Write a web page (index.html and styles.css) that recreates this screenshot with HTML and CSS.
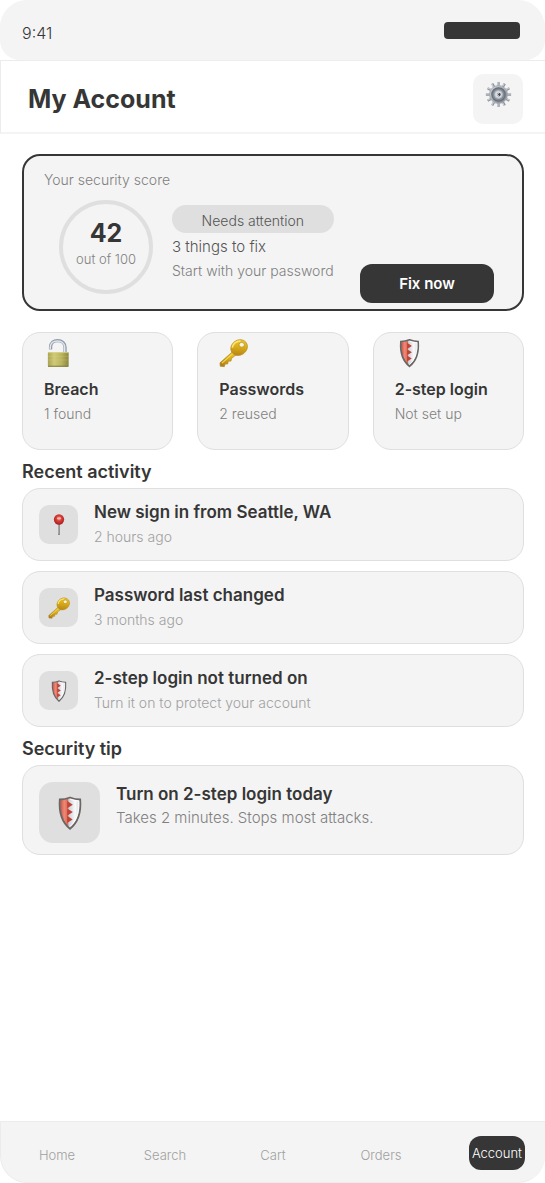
FILE: index.html
```html
<!DOCTYPE html>
<html lang="en">
<head>
  <meta charset="UTF-8">
  <meta name="viewport" content="width=device-width, initial-scale=1.0">
  <title>My Account</title>
  <link rel="stylesheet" href="styles.css">
</head>
<body>
  <!-- shared icons -->
  <svg class="icon-defs" aria-hidden="true">
    <defs>
      <linearGradient id="steel" x1="0" y1="0" x2="1" y2="1">
        <stop offset="0" stop-color="#d5d9df"/>
        <stop offset="1" stop-color="#7d828a"/>
      </linearGradient>
      <linearGradient id="brass" x1="0" y1="0" x2="1" y2="0">
        <stop offset="0" stop-color="#a9a351"/>
        <stop offset="0.3" stop-color="#d0ca78"/>
        <stop offset="0.65" stop-color="#bab45d"/>
        <stop offset="1" stop-color="#8b8640"/>
      </linearGradient>
      <linearGradient id="gold" x1="1" y1="0" x2="0" y2="1">
        <stop offset="0" stop-color="#f3d02f"/>
        <stop offset="0.45" stop-color="#dcae18"/>
        <stop offset="1" stop-color="#a87718"/>
      </linearGradient>
      <linearGradient id="red" x1="0" y1="0" x2="1" y2="0">
        <stop offset="0" stop-color="#c9523f"/>
        <stop offset="0.5" stop-color="#ee8877"/>
        <stop offset="1" stop-color="#d96552"/>
      </linearGradient>
      <linearGradient id="silver" x1="0" y1="0" x2="1" y2="0">
        <stop offset="0.3" stop-color="#b9bbc8"/>
        <stop offset="0.75" stop-color="#fafafc"/>
        <stop offset="1" stop-color="#d3d3d9"/>
      </linearGradient>
      <radialGradient id="ball" cx="0.5" cy="0.4" r="0.6">
        <stop offset="0" stop-color="#f58b82"/>
        <stop offset="0.45" stop-color="#d53c36"/>
        <stop offset="1" stop-color="#a81f20"/>
      </radialGradient>
    </defs>

    <symbol id="gear" viewBox="0 0 30 30">
      <g stroke="#8f949c" stroke-width="2.6">
        <path d="M15 1v28M1 15h28M8 2.9l14 24.200M22 2.900L8 27.100M2.900 8l24.200 14M27.100 8L2.900 22"/>
      </g>
      <g stroke="#d6dae0" stroke-width="1.1">
        <path d="M14.4 1v28M1 14.400h28M7.400 3.100l14 24.200M21.400 2.900L7.400 27.100M2.900 7.400l24.200 14M27.100 7.400L2.900 21.400"/>
      </g>
      <circle cx="15" cy="15" r="10" fill="url(#steel)" stroke="#a5aab2"/>
      <circle cx="15" cy="15" r="7.400" fill="#858b95" stroke="#696f79" stroke-width="1.400"/>
      <circle cx="15" cy="15" r="4.400" fill="#d9dde2" stroke="#aeb3ba"/>
      <circle cx="15.400" cy="15.100" r="2" fill="#454a52"/>
      <path d="M15 13.500a2 2 0 0 0 0 3.200" fill="none" stroke="#fff"/>
    </symbol>

    <symbol id="lock" viewBox="0 0 30 30">
      <path d="M6.800 11.500V9C6.800 4.300 10 2.200 14 2.200c4.600 0 7.800 2.800 7.800 7.200v6" fill="none" stroke="#929ca8" stroke-width="3.400"/>
      <path d="M6.500 11V9c0-4.300 3.200-6.400 7.500-6.400 4.400 0 7.400 2.700 7.400 6.800v6" fill="none" stroke="#e0e7ef" stroke-width="1.500"/>
      <rect x="4" y="14" width="21.500" height="15.200" rx="1" fill="url(#brass)"/>
      <path d="M4.200 14.600h21" stroke="#dfdb91" stroke-width="0.800"/>
      <path d="M4.200 18.400h21M4.200 22.200h21" stroke="#dfdb91" stroke-width="0.800" opacity="0.300"/>
      <path d="M4.200 28.700h21" stroke="#7b7637"/>
    </symbol>

    <symbol id="key" viewBox="0 0 30 30">
      <path d="M14.500 13.200L1 25.200l.3 3.500 4.200.4.800-2.600 2.700-.1.600-2.800 2.800-.2.700-2.900 5.800-4.400z" fill="url(#gold)" stroke="#a87d1b" stroke-width="0.600"/>
      <path d="M3 25.400l12.800-11" stroke="#f5db61" stroke-width="1.100"/>
      <ellipse cx="20.800" cy="9.400" rx="9" ry="7.800" transform="rotate(-35 20.800 9.400)" fill="url(#gold)" stroke="#bb901e" stroke-width="0.700"/>
      <path d="M13.800 9.600c.4-4.200 4.100-7.100 8.500-7.100" fill="none" stroke="#fae671" stroke-width="1.500"/>
      <ellipse cx="23.500" cy="6.500" rx="2.800" ry="2.500" fill="#f7f3dd" stroke="#b78e20" stroke-width="0.800"/>
    </symbol>

    <symbol id="shield" viewBox="0 0 30 30">
      <path d="M15 1.300c3 1.200 5.900 1.800 9 1.800.9 11-1.400 19.700-9 25.800C7.400 22.800 5.100 14.100 6 3.100c3.100 0 6-.6 9-1.800z" fill="url(#silver)"/>
      <path d="M13.500 2.300C11 3.200 9 3.600 6.500 3.500 5.800 14 7.600 21 13.500 26.700z" fill="url(#red)"/>
      <path d="M12.500 4.500l5 3.200-5 3.200zM12.500 11l5 3.200-5 3.200zM12.500 17.500l4.800 3.200-4.800 3.200z" fill="#c04433"/>
      <path d="M15 1.300c3 1.200 5.900 1.800 9 1.800.9 11-1.400 19.700-9 25.800C7.400 22.800 5.100 14.100 6 3.100c3.100 0 6-.6 9-1.800z" fill="none" stroke="#6a6663" stroke-width="1.600"/>
      <path d="M15 2.800c2.700 1 5 1.400 7.700 1.500.5 9.400-1.500 17-7.700 22.500" fill="none" stroke="#fff" stroke-width="0.800"/>
    </symbol>

    <symbol id="pin" viewBox="0 0 30 30">
      <path d="M15 13v15.500" stroke="#777b80" stroke-width="2.200"/>
      <path d="M14.600 14v13" stroke="#c3c6c9" stroke-width="0.800"/>
      <circle cx="15" cy="7.500" r="7" fill="url(#ball)"/>
      <ellipse cx="15" cy="6" rx="3" ry="1.500" fill="#ffc6bf" opacity="0.800"/>
    </symbol>
  </svg>

  <div class="app">
    <div class="status-bar">
      <span class="time">9:41</span>
      <span class="battery"></span>
    </div>

    <header class="header">
      <h1>My Account</h1>
      <button class="settings" type="button" aria-label="Settings">
        <svg class="icon icon-gear"><use href="#gear"/></svg>
      </button>
    </header>

    <main class="content">
      <!-- score -->
      <section class="score-card">
        <p class="score-label">Your security score</p>
        <div class="score-row">
          <div class="ring">
            <strong>42</strong>
            <span>out of 100</span>
          </div>
          <div class="score-info">
            <span class="pill">Needs attention</span>
            <p class="things">3 things to fix</p>
            <p class="start">Start with your password</p>
          </div>
          <button class="fix" type="button">Fix now</button>
        </div>
      </section>

      <section class="tiles">
        <div class="tile">
          <svg class="icon"><use href="#lock"/></svg>
          <h3>Breach</h3>
          <p>1 found</p>
        </div>
        <div class="tile">
          <svg class="icon"><use href="#key"/></svg>
          <h3>Passwords</h3>
          <p>2 reused</p>
        </div>
        <div class="tile">
          <svg class="icon"><use href="#shield"/></svg>
          <h3>2-step login</h3>
          <p>Not set up</p>
        </div>
      </section>

      <!-- activity -->
      <h2>Recent activity</h2>
      <section class="activity">
        <div class="row">
          <div class="row-icon"><svg class="icon icon-small"><use href="#pin"/></svg></div>
          <div class="row-text">
            <h3>New sign in from Seattle, WA</h3>
            <p>2 hours ago</p>
          </div>
        </div>
        <div class="row">
          <div class="row-icon"><svg class="icon icon-small"><use href="#key"/></svg></div>
          <div class="row-text">
            <h3>Password last changed</h3>
            <p>3 months ago</p>
          </div>
        </div>
        <div class="row">
          <div class="row-icon"><svg class="icon icon-small"><use href="#shield"/></svg></div>
          <div class="row-text">
            <h3>2-step login not turned on</h3>
            <p>Turn it on to protect your account</p>
          </div>
        </div>
      </section>

      <!-- tip -->
      <h2>Security tip</h2>
      <section class="row tip">
        <div class="row-icon"><svg class="icon icon-large"><use href="#shield"/></svg></div>
        <div class="row-text">
          <h3>Turn on 2-step login today</h3>
          <p>Takes 2 minutes. Stops most attacks.</p>
        </div>
      </section>
    </main>

    <nav class="bottom-nav">
      <a href="#home">Home</a>
      <a href="#search">Search</a>
      <a href="#cart">Cart</a>
      <a href="#orders">Orders</a>
      <a class="active" href="#account" aria-current="page">Account</a>
    </nav>
  </div>
</body>
</html>
```
FILE: styles.css
```css
* {
  box-sizing: border-box;
}

body {
  margin: 0;
  background: #fff;
  color: #363636;
  font-family: Inter, "Liberation Sans", sans-serif;
  font-size: 14px;
  font-weight: 300;
}

h1, h2, h3, p {
  margin: 0;
}

button {
  border: 0;
  padding: 0;
  font-family: inherit;
}

.icon-defs {
  position: absolute;
  width: 0;
  height: 0;
}

.icon {
  display: block;
  width: 29px;
  height: 30px;
}

.icon-small {
  width: 22px;
  height: 22px;
}

.icon-large {
  width: 34px;
  height: 34px;
}

.icon-gear {
  width: 27px;
  height: 27px;
}

.app {
  display: flex;
  flex-direction: column;
  min-height: 100vh;
}

/* top */
.status-bar {
  display: flex;
  justify-content: space-between;
  align-items: flex-start;
  height: 60px;
  padding: 22px 25px 0 22px;
  background: #f4f4f4;
  border-radius: 27px 27px 20px 20px;
}

.time {
  font-size: 16px;
  line-height: 22px;
}

.battery {
  width: 76px;
  height: 17px;
  background: #363636;
  border-radius: 4px;
}

.header {
  display: flex;
  justify-content: space-between;
  align-items: center;
  padding: 13px 22px 8px 27px;
  border: 1px solid #ececec;
  border-width: 1px 0 2px 1px;
  border-bottom-color: #f4f4f4;
}

h1 {
  font-size: 25px;
  line-height: 32px;
  font-weight: 700;
}

.settings {
  display: flex;
  justify-content: center;
  width: 50px;
  height: 50px;
  padding-top: 7px;
  background: #f4f4f4;
  border-radius: 10px;
}

.content {
  padding: 20px 21px 20px 22px;
}

/* security score */
.score-card {
  padding: 14px 28px 6px 20px;
  background: #f4f4f4;
  border: 2px solid #363636;
  border-radius: 18px;
}

.score-label {
  line-height: 20px;
  color: #808080;
}

.score-row {
  display: flex;
  align-items: flex-start;
  padding: 10px 0 0 15px;
}

.ring {
  display: flex;
  flex-direction: column;
  align-items: center;
  width: 94px;
  height: 94px;
  padding-top: 14px;
  border: 4px solid #dfdfdf;
  border-radius: 50%;
}

.ring strong {
  font-size: 25px;
  line-height: 30px;
  font-weight: 700;
}

.ring span {
  font-size: 13px;
  line-height: 22px;
  color: #808080;
}

.score-info {
  padding: 5px 0 0 19px;
}

.pill {
  display: block;
  padding: 4px 0 0;
  background: #dfdfdf;
  border-radius: 14px;
  line-height: 24px;
  text-align: center;
  color: #555;
}

.things {
  margin-top: 2px;
  font-size: 15px;
  line-height: 24px;
  color: #555;
}

.start {
  line-height: 24px;
  color: #808080;
}

.fix {
  width: 134px;
  height: 39px;
  margin: 64px 0 0 auto;
  background: #363636;
  border-radius: 12px;
  font-size: 15px;
  font-weight: 600;
  color: #fff;
}

/* tiles */
.tiles {
  display: grid;
  grid-template-columns: repeat(3, 1fr);
  gap: 24px;
  margin-top: 21px;
}

.tile {
  padding: 5px 10px 23px 21px;
  background: #f4f4f4;
  border: 1px solid #dfdfdf;
  border-radius: 18px;
}

.tile h3 {
  margin-top: 8px;
  font-size: 16px;
  line-height: 26px;
  font-weight: 600;
  white-space: nowrap;
}

.tile p {
  line-height: 24px;
  color: #808080;
}

h2 {
  margin: 9px 0 3px;
  font-size: 18px;
  line-height: 26px;
  font-weight: 600;
}

/* list rows */
.activity {
  display: grid;
  gap: 10px;
}

.row {
  display: flex;
  gap: 16px;
  padding: 16px;
  background: #f4f4f4;
  border: 1px solid #dfdfdf;
  border-radius: 18px;
}

.row-icon {
  display: flex;
  justify-content: center;
  align-items: center;
  width: 39px;
  height: 39px;
  background: #dfdfdf;
  border-radius: 10px;
}

.row-text {
  margin: -5px 0;
}

.row-text h3 {
  font-size: 17px;
  line-height: 25px;
  font-weight: 600;
}

.row-text p {
  line-height: 24px;
  color: #a0a0a0;
}

.tip {
  padding-bottom: 11px;
}

.tip .row-icon {
  width: 61px;
  height: 61px;
  border-radius: 14px;
}

.tip .row-text {
  margin: 0;
}

.tip .row-text p {
  font-size: 15px;
  line-height: 22px;
  color: #808080;
}

/* bottom menu */
.bottom-nav {
  display: grid;
  grid-template-columns: repeat(4, 1fr) 90px;
  align-items: center;
  justify-items: center;
  height: 62px;
  margin-top: auto;
  padding: 5px 20px 0 2px;
  background: #f4f4f4;
  border: 1px solid #ececec;
  border-width: 1px 0 1px 1px;
  border-radius: 0 0 27px 27px;
}

.bottom-nav a {
  font-size: 13px;
  line-height: 20px;
  color: #a0a0a0;
  text-decoration: none;
}

.bottom-nav .active {
  justify-self: end;
  margin-bottom: 4px;
  padding: 7px 3px;
  background: #363636;
  border-radius: 12px;
  color: #fff;
}
```
